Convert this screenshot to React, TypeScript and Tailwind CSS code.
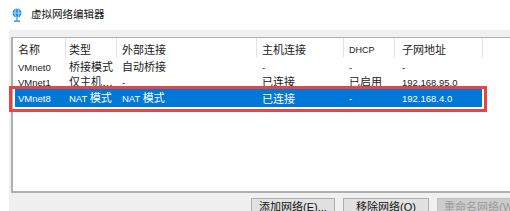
import React from "react";

const cols = [
  { w: "w-[53px]", pl: "pl-[5px]" },
  { w: "w-[51px]", pl: "pl-[3px]" },
  { w: "w-[140px]", pl: "pl-[5px]" },
  { w: "w-[87px]", pl: "pl-[5px]" },
  { w: "w-[51px]", pl: "pl-[5px]" },
  { w: "w-[88px]", pl: "pl-[7px]" },
];

function Mixed({ text }: { text: string }) {
  const parts = text.split(/([\u4e00-\u9fff…]+)/).filter((p) => p.length > 0);
  return (
    <>
      {parts.map((p, i) =>
        /[\u4e00-\u9fff]/.test(p) ? (
          <span key={i} className="text-[11px]">
            {p}
          </span>
        ) : (
          <span key={i} className="text-[9.5px]">
            {p}
          </span>
        )
      )}
    </>
  );
}

function Row({ cells, selected, h }: { cells: string[]; selected?: boolean; h: string }) {
  return (
    <div className={`flex ${h} items-center ${selected ? "ml-[2px] w-[467px] bg-[#0078d7] text-white" : "text-[#1a1a1a]"}`}>
      {cells.map((c, i) => (
        <div
          key={i}
          className={`${selected && i === 0 ? "w-[51px] pl-[3px]" : cols[i].w + " " + cols[i].pl} shrink-0 whitespace-nowrap leading-[14px] overflow-hidden`}
        >
          <Mixed text={c} />
        </div>
      ))}
    </div>
  );
}

export default function App() {
  return (
    <div
      className="relative w-[510px] h-[211px] overflow-hidden bg-white flex flex-col"
      style={{ fontFamily: '"Liberation Sans", "Noto Sans CJK SC", sans-serif' }}
    >
      <div className="h-[30px] shrink-0 flex items-center pl-[12px] gap-[9px]">
        <svg width="10" height="14" viewBox="0 0 10 14">
          <circle cx="5" cy="5" r="4.5" fill="#2f8fe0" />
          <ellipse cx="5" cy="5" rx="2" ry="4.5" fill="none" stroke="#bfe3ff" strokeWidth="0.8" />
          <line x1="0.5" y1="5" x2="9.5" y2="5" stroke="#bfe3ff" strokeWidth="0.8" />
          <rect x="4.5" y="9.5" width="1" height="3" fill="#2f6fb0" />
          <rect x="2" y="12.5" width="6" height="1.2" fill="#2f6fb0" />
        </svg>
        <span className="text-[10.5px] text-[#111]">虚拟网络编辑器</span>
      </div>
      <div className="ml-[9px] flex-1 bg-[#f0f0f0] pt-[7px] pl-[2px] flex flex-col">
        <div className="w-[520px] h-[156px] shrink-0 bg-white border-t border-l-2 border-b-2 border-[#b0b0b0]">
          <div className="flex h-[20px] text-[#1a1a1a]">
            {["名称", "类型", "外部连接", "主机连接", "DHCP", "子网地址"].map((t, i) => (
              <div
                key={i}
                className={`${cols[i].w} ${cols[i].pl} shrink-0 flex items-center pt-[4px] border-r border-[#e3e3e3] whitespace-nowrap leading-none`}
              >
                {t === "DHCP" ? <span className="text-[9px]">{t}</span> : <span className="text-[11px]">{t}</span>}
              </div>
            ))}
          </div>
          <div className="h-[1px]" />
          <Row h="h-[15px]" cells={["VMnet0", "桥接模式", "自动桥接", "-", "-", "-"]} />
          <Row h="h-[15px]" cells={["VMnet1", "仅主机…", "-", "已连接", "已启用", "192.168.95.0"]} />
          <Row h="h-[18px]" selected cells={["VMnet8", "NAT 模式", "NAT 模式", "已连接", "-", "192.168.4.0"]} />
        </div>
        <div className="flex gap-[8px] pl-[240px] pt-[5px]">
          <button className="w-[84px] h-[24px] shrink-0 flex justify-center items-start pt-[2px] leading-[13px] bg-[#e1e1e1] border border-[#adadad] text-[11px] text-[#111] whitespace-nowrap">
            添加网络(E)...
          </button>
          <button className="w-[86px] h-[24px] shrink-0 flex justify-center items-start pt-[2px] leading-[13px] bg-[#e1e1e1] border border-[#adadad] text-[11px] text-[#111] whitespace-nowrap">
            移除网络(O)
          </button>
          <button className="w-[86px] h-[24px] shrink-0 flex justify-start items-start pt-[2px] pl-[6px] leading-[13px] bg-[#cccccc] border border-[#bfbfbf] text-[11px] text-[#9a9a9a] whitespace-nowrap">
            重命名网络(W)...
          </button>
        </div>
      </div>
      <div className="absolute left-[9px] top-[86px] w-[478px] h-[26px] border-[3px] border-[#e64545]" />
    </div>
  );
}
